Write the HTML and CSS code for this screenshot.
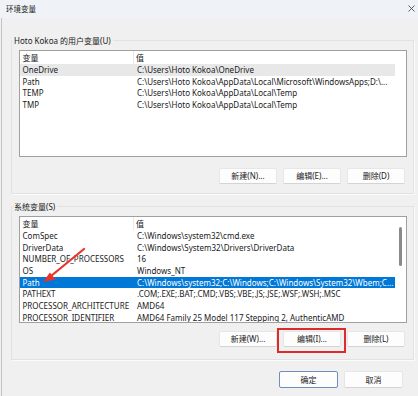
FILE: index.html
```html
<!DOCTYPE html>
<html>
<head>
<meta charset="utf-8">
<link rel="stylesheet" href="styles.css">
</head>
<body>
<div class="window">
  <div class="titlebar">
    <span class="title">环境变量</span>
    <svg class="close" width="7" height="7" viewBox="0 0 7 7"><path d="M0.5 0.5L6.5 6.5M6.5 0.5L0.5 6.5" stroke="#4a4a4a" stroke-width="0.9"/></svg>
  </div>
  <div class="body">
    <fieldset class="group">
      <legend>Hoto Kokoa 的用户变量(U)</legend>
      <div class="group-inner">
        <div class="list">
          <div class="list-main">
            <div class="list-head"><div class="c1">变量</div><div class="c2">值</div></div>
            <div class="row hover"><div class="c1">OneDrive</div><div class="c2">C:\Users\Hoto Kokoa\OneDrive</div></div>
            <div class="row"><div class="c1">Path</div><div class="c2">C:\Users\Hoto Kokoa\AppData\Local\Microsoft\WindowsApps;D:\...</div></div>
            <div class="row"><div class="c1">TEMP</div><div class="c2">C:\Users\Hoto Kokoa\AppData\Local\Temp</div></div>
            <div class="row"><div class="c1">TMP</div><div class="c2">C:\Users\Hoto Kokoa\AppData\Local\Temp</div></div>
          </div>
          <div class="list-side"></div>
        </div>
        <div class="btn-row btn-row-1">
          <button class="btn">新建(N)...</button>
          <button class="btn">编辑(E)...</button>
          <button class="btn">删除(D)</button>
        </div>
      </div>
    </fieldset>

    <fieldset class="group group-sys">
      <legend>系统变量(S)</legend>
      <div class="group-inner group-inner-sys">
        <div class="list">
          <div class="list-main">
            <div class="list-head"><div class="c1">变量</div><div class="c2">值</div></div>
            <div class="row"><div class="c1">ComSpec</div><div class="c2">C:\Windows\system32\cmd.exe</div></div>
            <div class="row"><div class="c1">DriverData</div><div class="c2">C:\Windows\System32\Drivers\DriverData</div></div>
            <div class="row"><div class="c1">NUMBER_OF_PROCESSORS</div><div class="c2">16</div></div>
            <div class="row"><div class="c1">OS</div><div class="c2">Windows_NT</div></div>
            <div class="row selected"><div class="c1">Path</div><div class="c2">C:\Windows\system32;C:\Windows;C:\Windows\System32\Wbem;C...</div></div>
            <div class="row"><div class="c1">PATHEXT</div><div class="c2">.COM;.EXE;.BAT;.CMD;.VBS;.VBE;.JS;.JSE;.WSF;.WSH;.MSC</div></div>
            <div class="row"><div class="c1">PROCESSOR_ARCHITECTURE</div><div class="c2">AMD64</div></div>
            <div class="row"><div class="c1">PROCESSOR_IDENTIFIER</div><div class="c2">AMD64 Family 25 Model 117 Stepping 2, AuthenticAMD</div></div>
          </div>
          <div class="list-side scrollbar"><div class="thumb"></div></div>
        </div>
        <div class="btn-row btn-row-2">
          <button class="btn">新建(W)...</button>
          <button class="btn">编辑(I)...</button>
          <button class="btn">删除(L)</button>
        </div>
      </div>
    </fieldset>

    <div class="footer">
      <button class="btn btn-wide btn-default">确定</button>
      <button class="btn btn-wide">取消</button>
    </div>
  </div>

  <div class="mark-box"></div>
  <svg class="arrow" width="60" height="50" viewBox="0 0 60 50">
    <line x1="50" y1="4" x2="17" y2="31" stroke="#e8322c" stroke-width="2.2" stroke-linecap="round"/>
    <polygon points="9,37 15.9,27.6 21.6,34.6" fill="#e8322c"/>
  </svg>
</div>
</body>
</html>
```

FILE: styles.css
```css
* { box-sizing: border-box; }
html, body {
  margin: 0;
  padding: 0;
  background: #f0f0f0;
}
body {
  width: 418px;
  height: 396px;
  overflow: hidden;
  font-family: "Noto Sans", "Noto Sans CJK SC", sans-serif;
  font-size: 8px;
  color: #1a1a1a;
}
.window {
  position: relative;
  width: 418px;
  height: 396px;
  display: flex;
  flex-direction: column;
  background: #f0f0f0;
}
.titlebar {
  height: 18px;
  flex: none;
  background: #eff3f8;
  display: flex;
  align-items: center;
  justify-content: space-between;
  padding: 0 3px 0 6px;
}
.title {
  font-size: 7.5px;
  line-height: 18px;
}
.close { display: block; margin-top: -1px; }
.body {
  flex: 1;
  margin-left: 1px;
  border-left: 1px solid #c4c4c4;
  padding: 16px 0 0 9px;
  display: flex;
  flex-direction: column;
}
.group {
  margin: 0;
  padding: 0;
  width: 403px;
  min-width: 0;
  border: 1px solid #e2e2e2;
  box-shadow: 1px 1px 0 #fbfbfb;
}
.group legend {
  padding: 0 2px;
  line-height: 13px;
  font-size: 8px;
}
.group-sys { margin-top: 6px; }
.group-inner {
  padding: 3px 6px 9px 7px;
}
.group-inner-sys { padding-bottom: 12px; }
.list {
  height: 107px;
  border: 1px solid #a0a0a0;
  background: #fff;
  display: flex;
  overflow: hidden;
}
.list-main {
  width: 375px;
  flex: none;
  overflow: hidden;
}
.list-side {
  flex: 1;
  background: #fff;
}
.scrollbar {
  padding: 10px 0 0 4px;
}
.thumb {
  width: 3px;
  height: 39px;
  border-radius: 2px;
  background: #8a8a8a;
}
.list-head {
  height: 13px;
  display: grid;
  grid-template-columns: 114px 1fr;
  line-height: 13px;
}
.list-head .c1 {
  padding-left: 2.5px;
  border-right: 1px solid #e8e8e8;
}
.list-head .c2 { padding-left: 2px; }
.row {
  height: 11.7px;
  line-height: 11.7px;
  display: grid;
  grid-template-columns: 114px 261px;
  white-space: nowrap;
}
.row .c1 { padding-left: 2.5px; overflow: hidden; }
.row .c2 { padding-left: 3px; overflow: hidden; }
.row.hover { background: #e8e8e8; }
.row.selected { background: #0078d7; color: #fff; }
.btn-row {
  display: flex;
  justify-content: flex-end;
  gap: 6px;
  margin-right: 2px;
}
.btn-row-1 { margin-top: 11px; }
.btn-row-2 { margin-top: 8px; }
.btn {
  width: 58px;
  height: 16px;
  padding: 0;
  margin: 0;
  font-family: inherit;
  font-size: 8px;
  color: #1a1a1a;
  background: #fdfdfd;
  border: 1px solid #e6e6e6;
  border-bottom-color: #d4d4d4;
  border-radius: 2px;
  line-height: 14px;
}
.footer {
  width: 403px;
  display: flex;
  justify-content: flex-end;
  gap: 6px;
  padding-right: 11px;
  margin-top: 11px;
}
.btn-wide { width: 59px; height: 17px; }
.btn-default { border: 1px solid #6e8fbb; }
.mark-box {
  position: absolute;
  left: 277px;
  top: 328px;
  width: 69px;
  height: 25px;
  border: 2px solid #e02a2a;
}
.arrow {
  position: absolute;
  left: 34px;
  top: 245px;
}
```
